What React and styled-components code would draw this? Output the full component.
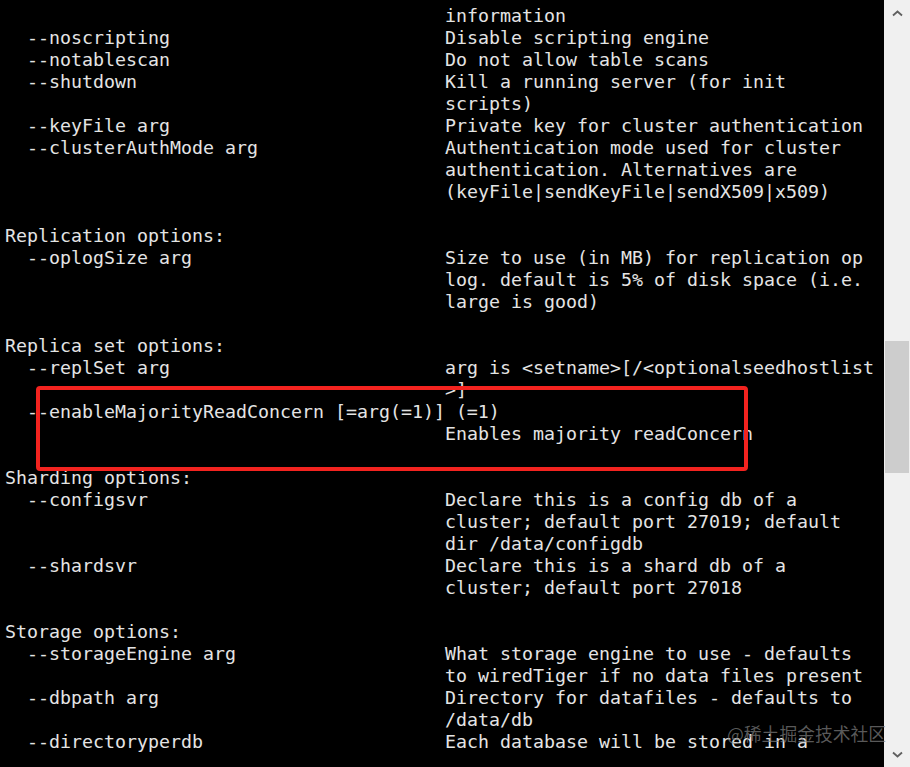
import React from 'react';
import styled, { createGlobalStyle } from 'styled-components';

const GlobalStyle = createGlobalStyle`
  html, body {
    margin: 0;
    padding: 0;
    background: #000;
  }
  body {
    overflow: hidden;
  }
`;

const Screen = styled.div`
  position: relative;
  display: flex;
  width: 910px;
  height: 767px;
  overflow: hidden;
  background: #000;
`;

const Console = styled.div`
  flex: 1;
  padding: 5px 0 0 5px;
  font-family: 'DejaVu Sans Mono', 'Liberation Mono', monospace;
  font-size: 18.27px;
  line-height: 22px;
  color: #e4e4e4;
  white-space: pre;
  overflow: hidden;
`;

const Row = styled.div`
  display: grid;
  grid-template-columns: 440px 1fr;
  height: 22px;
`;

const Opt = styled.span`
  padding-left: 22px;
`;

const Heading = styled.div`
  height: 22px;
`;

const Wide = styled.div`
  height: 22px;
  padding-left: 22px;
`;

const Highlight = styled.div`
  position: absolute;
  left: 36px;
  top: 386px;
  width: 712px;
  height: 85px;
  box-sizing: border-box;
  border: 4px solid #f3231f;
  border-radius: 4px;
  pointer-events: none;
`;

const Watermark = styled.div`
  position: absolute;
  left: 727px;
  top: 720px;
  font-family: 'Noto Sans CJK SC', sans-serif;
  font-size: 17.8px;
  line-height: 26px;
  color: rgba(125, 125, 125, 0.72);
  white-space: nowrap;
`;

const Scrollbar = styled.div`
  width: 26px;
  display: flex;
  flex-direction: column;
  background: #f0f0f0;
`;

const Arrow = styled.div`
  height: 26px;
  display: flex;
  align-items: center;
  justify-content: center;
`;

const Track = styled.div`
  flex: 1;
  display: flex;
  flex-direction: column;
  align-items: center;
`;

const Thumb = styled.div`
  width: 24px;
  height: 132px;
  margin-top: ${(p) => p.offset}px;
  background: #cdcdcd;
`;

const Chevron = ({ down }) => (
  <svg width="11" height="7" viewBox="0 0 11 7">
    <path
      d={down ? 'M1 1.5 L5.5 5.5 L10 1.5' : 'M1 5.5 L5.5 1.5 L10 5.5'}
      fill="none"
      stroke="#606060"
      strokeWidth="1.8"
    />
  </svg>
);

const rows = [
  { desc: 'information' },
  { opt: '--noscripting', desc: 'Disable scripting engine' },
  { opt: '--notablescan', desc: 'Do not allow table scans' },
  { opt: '--shutdown', desc: 'Kill a running server (for init' },
  { desc: 'scripts)' },
  { opt: '--keyFile arg', desc: 'Private key for cluster authentication' },
  { opt: '--clusterAuthMode arg', desc: 'Authentication mode used for cluster' },
  { desc: 'authentication. Alternatives are' },
  { desc: '(keyFile|sendKeyFile|sendX509|x509)' },
  { blank: true },
  { heading: 'Replication options:' },
  { opt: '--oplogSize arg', desc: 'Size to use (in MB) for replication op' },
  { desc: 'log. default is 5% of disk space (i.e.' },
  { desc: 'large is good)' },
  { blank: true },
  { heading: 'Replica set options:' },
  { opt: '--replSet arg', desc: 'arg is <setname>[/<optionalseedhostlist' },
  { desc: '>]' },
  { wide: '--enableMajorityReadConcern [=arg(=1)] (=1)' },
  { desc: 'Enables majority readConcern' },
  { blank: true },
  { heading: 'Sharding options:' },
  { opt: '--configsvr', desc: 'Declare this is a config db of a' },
  { desc: 'cluster; default port 27019; default' },
  { desc: 'dir /data/configdb' },
  { opt: '--shardsvr', desc: 'Declare this is a shard db of a' },
  { desc: 'cluster; default port 27018' },
  { blank: true },
  { heading: 'Storage options:' },
  { opt: '--storageEngine arg', desc: 'What storage engine to use - defaults' },
  { desc: 'to wiredTiger if no data files present' },
  { opt: '--dbpath arg', desc: 'Directory for datafiles - defaults to' },
  { desc: '/data/db' },
  { opt: '--directoryperdb', desc: 'Each database will be stored in a' },
  { blank: true },
];

function Line({ row }) {
  if (row.heading) return <Heading>{row.heading}</Heading>;
  if (row.wide) return <Wide>{row.wide}</Wide>;
  if (row.blank) return <Heading />;
  return (
    <Row>
      <Opt>{row.opt || ''}</Opt>
      <span>{row.desc}</span>
    </Row>
  );
}

export default function App() {
  return (
    <>
      <GlobalStyle />
      <Screen>
        <Console>
          {rows.map((row, i) => (
            <Line key={i} row={row} />
          ))}
        </Console>
        <Scrollbar>
          <Arrow>
            <Chevron />
          </Arrow>
          <Track>
            <Thumb offset={315} />
          </Track>
          <Arrow>
            <Chevron down />
          </Arrow>
        </Scrollbar>
        <Highlight />
        <Watermark>@稀土掘金技术社区</Watermark>
      </Screen>
    </>
  );
}
